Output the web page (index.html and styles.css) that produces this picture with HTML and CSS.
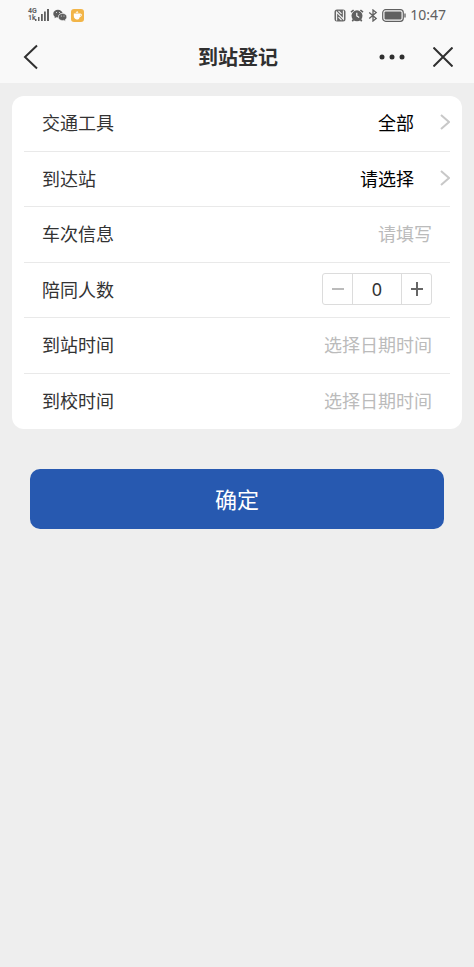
FILE: index.html
```html
<!DOCTYPE html>
<html lang="zh-CN">
<head>
<meta charset="utf-8">
<meta name="viewport" content="width=device-width, initial-scale=1">
<title>到站登记</title>
<link rel="stylesheet" href="styles.css">
</head>
<body>
<header class="top">
  <div class="status">
    <div class="status-left">
      <span class="network"><span>4G</span><span>1k</span></span>
      <svg class="signal" width="14" height="14" viewBox="0 0 14 14" fill="#606060"><path d="M0 11h1.500v2H0zM3 9h1.500v4H3zM6 6h1.800v7H6zM9 3.500h1.800V13H9zM12 1h2v12h-2z"/></svg>
      <svg class="wechat" width="14" height="13" viewBox="0 0 14 13"><path fill="#5d5d5d" d="M5 .8C2.300.8.3 2.500.3 4.700c0 1.300.6 2.300 1.600 3L1.500 9.200l1.800-.9 1.900.2C5 5.800 6.800 4 9.600 4 9 2.200 7.200.8 5 .8z"/><path fill="#5d5d5d" stroke="#f9f9f9" stroke-width=".4" d="M9.600 4.500c-2.500 0-4.200 1.500-4.200 3.500s1.800 3.500 4.200 3.500l1.200-.2 1.600.9-.4-1.400c1-.7 1.700-1.600 1.700-2.800 0-2-1.800-3.500-4.100-3.500z"/><g fill="#f9f9f9"><circle cx="3.500" cy="3.500" r=".5"/><circle cx="6.500" cy="3.500" r=".5"/><circle cx="8.300" cy="7" r=".5"/><circle cx="11" cy="7" r=".5"/></g></svg>
      <svg class="cup" width="13" height="13" viewBox="0 0 13 13"><rect width="13" height="13" rx="3" fill="#f2b548"/><path fill="#fff" d="M2.800 4.500h6.400c2.300 0 2.100 3.300-.4 3.400C8.400 9.600 7.500 10.500 6 10.500S2.800 9.200 2.800 7zM4.500 3.700 6.200 2l1.300 1.700z"/><path d="M9.200 5.400v1.500c1 0 1-1.500 0-1.500z" fill="#f2b548"/></svg>
    </div>
    <div class="status-right">
      <svg width="12" height="13" viewBox="0 0 12 13"><rect x=".5" y=".5" width="11" height="12" rx="2.500" fill="#686868"/><path fill="none" stroke="#f9f9f9" stroke-width="1.100" d="M2.600 11.500V3.200l6.800 7V1.500M4.500 1.800l3 3M4.500 8.200l3 3"/></svg>
      <svg width="14" height="13" viewBox="0 0 14 13"><circle cx="7" cy="6.800" r="5.500" fill="#606060"/><path fill="none" stroke="#606060" stroke-width="1.600" d="M1 3.200 3.600 1M13 3.200 10.400 1M3.500 10.500 2.300 12.300M10.500 10.500l1.200 1.800"/><path fill="none" stroke="#f9f9f9" stroke-width="1.200" d="M6.800 3.800V7l2.400 1.500"/></svg>
      <svg width="10" height="13" viewBox="0 0 10 13" fill="none" stroke="#606060" stroke-width="1.300"><path d="m1.200 3.500 7 6L5 12V1l3.200 2.500-7 6"/></svg>
      <svg width="24" height="13" viewBox="0 0 24 13"><rect x=".7" y=".7" width="20.600" height="11.600" rx="3" fill="none" stroke="#606060" stroke-width="1.200"/><rect x="2.500" y="2.500" width="17" height="8" rx="1" fill="#606060"/><path d="M23 4.500v4" stroke="#606060" stroke-width="1.300"/></svg>
      <time class="clock">10:47</time>
    </div>
  </div>
  <nav class="nav">
    <button class="icon-btn back" type="button" aria-label="返回"><svg width="16" height="26" viewBox="0 0 16 26"><path d="M14 1.500 2 13l12 11.500"/></svg></button>
    <h1 class="title">到站登记</h1>
    <div class="actions">
      <button class="icon-btn" type="button" aria-label="更多"><svg width="26" height="6" viewBox="0 0 26 6"><g fill="#303030" stroke="none"><circle cx="3" cy="3" r="2.500"/><circle cx="13" cy="3" r="2.500"/><circle cx="23" cy="3" r="2.500"/></g></svg></button>
      <button class="icon-btn" type="button" aria-label="关闭"><svg width="20" height="20" viewBox="0 0 20 20"><path d="m.5.5 19 19M19.500.5l-19 19"/></svg></button>
    </div>
  </nav>
</header>
<main>
  <form class="form">
    <div class="card">
      <div class="row">
        <label for="vehicle">交通工具</label>
        <select id="vehicle" class="field choice"><option>全部</option></select>
        <svg class="chevron" width="10" height="18" viewBox="0 0 10 18"><path d="m1 2 8 7-8 7"/></svg>
      </div>
      <div class="row">
        <label for="station">到达站</label>
        <select id="station" class="field choice"><option>请选择</option></select>
        <svg class="chevron" width="10" height="18" viewBox="0 0 10 18"><path d="m1 2 8 7-8 7"/></svg>
      </div>
      <div class="row">
        <label for="train">车次信息</label>
        <input id="train" class="field entry" type="text" placeholder="请填写">
      </div>
      <div class="row">
        <label for="people">陪同人数</label>
        <div class="stepper">
          <button type="button" class="minus" aria-label="减少" disabled><svg width="12" height="12" viewBox="0 0 12 12"><path d="M0 6h12"/></svg></button>
          <input id="people" type="text" inputmode="numeric" value="0">
          <button type="button" class="plus" aria-label="增加"><svg width="12" height="14" viewBox="0 0 12 14"><path d="M0 7h12M6 0v14"/></svg></button>
        </div>
      </div>
      <div class="row">
        <label for="arrive">到站时间</label>
        <input id="arrive" class="field entry" type="text" placeholder="选择日期时间">
      </div>
      <div class="row">
        <label for="school">到校时间</label>
        <input id="school" class="field entry" type="text" placeholder="选择日期时间">
      </div>
    </div>
    <button class="submit" type="submit">确定</button>
  </form>
</main>
</body>
</html>
```
FILE: styles.css
```css
* {
  box-sizing: border-box;
}

body {
  margin: 0;
  background: #eeeeee;
  color: #333333;
  font-family: "Noto Sans CJK SC", sans-serif;
  font-size: 18px;
}

button,
input,
select {
  margin: 0;
  padding: 0;
  border: 0;
  background: transparent;
  color: inherit;
  font: inherit;
}

svg {
  display: block;
  flex: none;
}

.top {
  background: #f9f9f9;
}

.status {
  display: flex;
  justify-content: space-between;
  align-items: center;
  height: 30px;
  padding: 0 28px;
}

.status-left,
.status-right {
  display: flex;
  align-items: center;
  gap: 4px;
}

.network {
  display: flex;
  flex-direction: column;
  width: 8px;
  margin-right: -5px;
  color: #606060;
  font: bold 7px/7px "Roboto", sans-serif;
}

.clock {
  color: #606060;
  font: 14px/20px "Noto Sans", sans-serif;
}

.nav {
  display: grid;
  grid-template-columns: 1fr auto 1fr;
  align-items: center;
  height: 53px;
  padding: 0 21px 0 23px;
}

.title {
  margin: 0;
  color: #303030;
  font-size: 20px;
  font-weight: bold;
  line-height: 30px;
}

.icon-btn svg {
  fill: none;
  stroke: #303030;
  stroke-width: 2;
}

.back {
  justify-self: start;
}

.actions {
  display: flex;
  justify-self: end;
  align-items: center;
  gap: 28px;
}

.form {
  padding: 13px 12px;
}

.card {
  display: grid;
  grid-auto-rows: 1fr;
  min-height: 333px;
  padding: 0 12px;
  border-radius: 12px;
  background: #ffffff;
}

.row {
  display: flex;
  align-items: center;
  padding: 0 18px 2px;
  border-bottom: 1px solid #e9e9e9;
}

.row:last-child {
  border-bottom: 0;
}

label {
  flex: none;
  line-height: 28px;
}

.field {
  flex: 1;
  min-width: 0;
  height: 32px;
  outline: 0;
  text-align: right;
}

.choice {
  appearance: none;
  color: #000000;
  text-align-last: right;
}

.chevron {
  margin: 0 -18px 0 26px;
  fill: none;
  stroke: #c8c8c8;
  stroke-width: 2;
}

.entry::placeholder {
  color: #bbbbbb;
  opacity: 1;
}

.stepper {
  display: flex;
  height: 32px;
  margin-left: auto;
  border: 1px solid #dcdcdc;
  border-radius: 3px;
}

.stepper input {
  width: 50px;
  border: solid #dcdcdc;
  border-width: 0 1px;
  font-family: "Noto Sans", sans-serif;
  text-align: center;
}

.stepper button {
  display: grid;
  place-items: center;
  width: 29px;
}

.stepper svg {
  fill: none;
  stroke: #666666;
  stroke-width: 2;
}

.stepper .minus svg {
  stroke: #bbbbbb;
}

.submit {
  display: block;
  width: calc(100% - 36px);
  height: 60px;
  margin: 40px 18px 0;
  padding-bottom: 2px;
  border-radius: 10px;
  background: #2759b0;
  color: #ffffff;
  font-size: 22px;
}
```
